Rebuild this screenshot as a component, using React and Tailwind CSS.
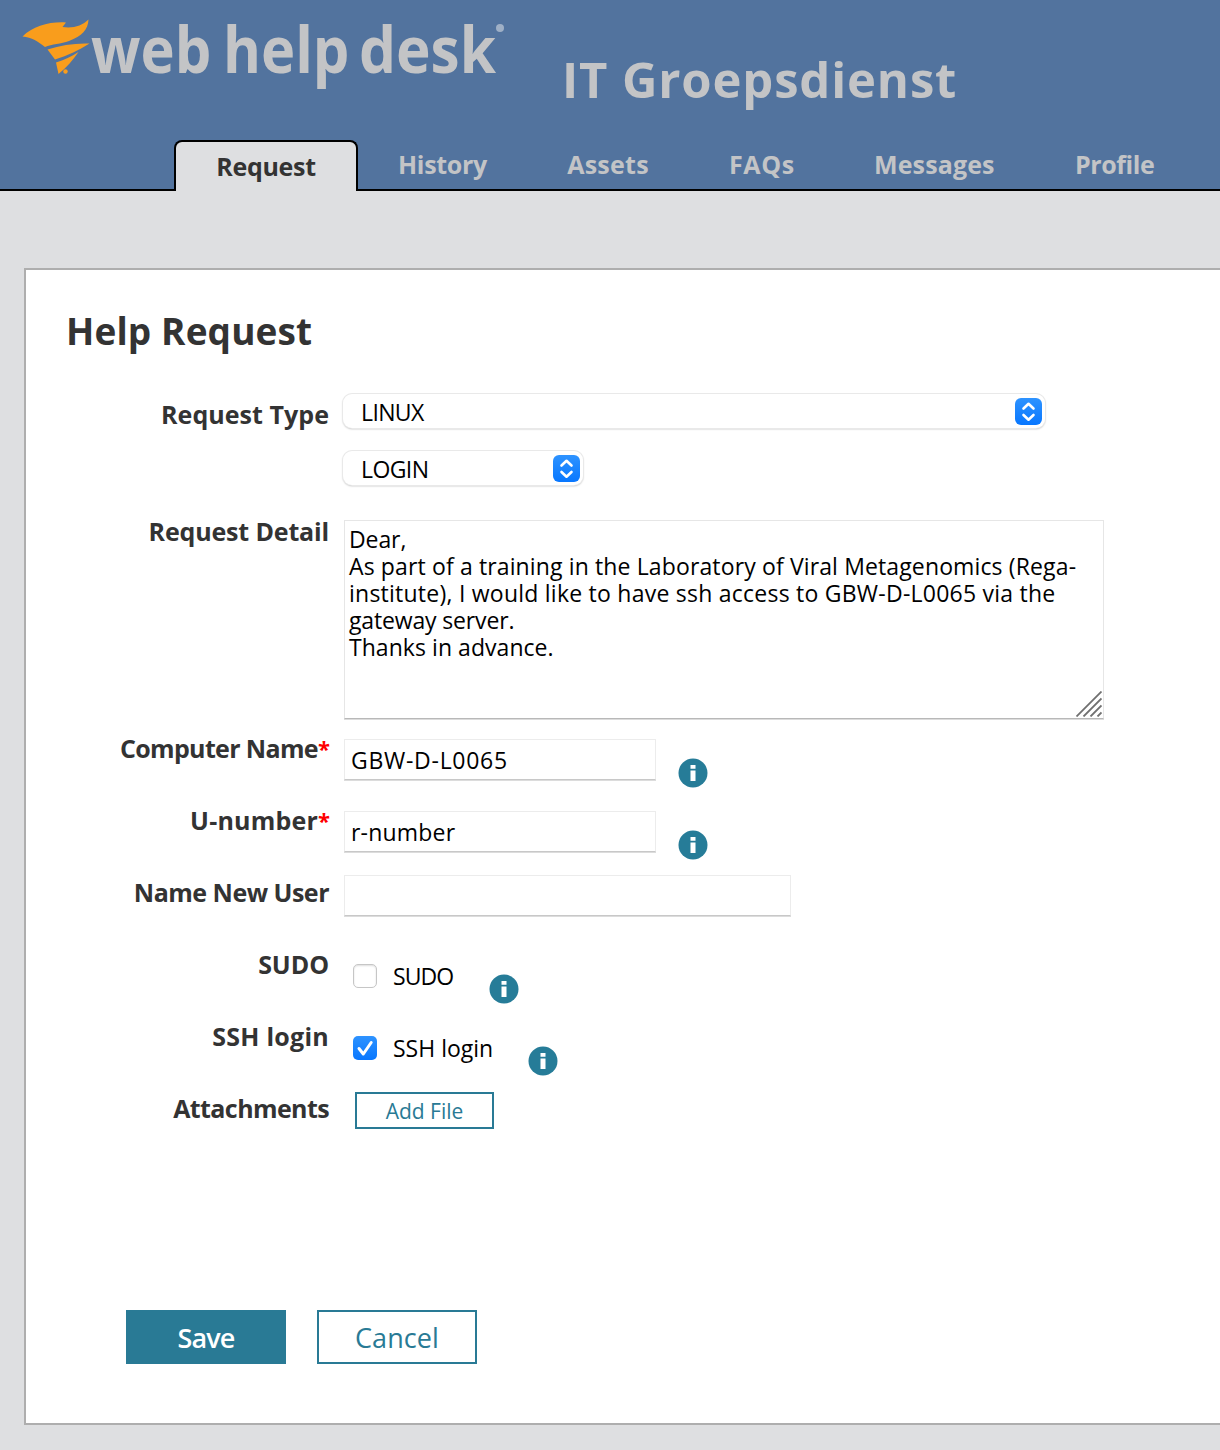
import React from "react";

const tabs = [
  ["History", "w-[89px] ml-[40px]", "tracking-[-0.31px]"],
  ["Assets", "w-[82px] ml-[80px]", "tracking-[0.26px]"],
  ["FAQs", "w-[65px] ml-[80px]", "tracking-[0.6px]"],
  ["Messages", "w-[120px] ml-[80px]", "tracking-[0.12px]"],
  ["Profile", "w-[79px] ml-[81px]", "tracking-[-0.41px]"],
];

function Logo() {
  return (
    <div className="flex text-[#c3c4c6]">
      <svg className="ml-[22px] mt-[19px] h-[56px] w-[68px] shrink-0" viewBox="22 19 68 56" fill="#f99d1c">
        <path d="M22.500 36.500C33 26 50 21.500 66 22.500L62.500 27C73 28.500 82 26 88.500 19.500C88 30 82 36 69 41C61 44 52 44 45 47C38 41.500 32 37.500 22.500 36.500Z" />
        <path d="M47.500 49.500C61 45 75 43 89.500 43.500C79 50 68 55.500 55 59.500Z" />
        <path d="M56 62.500C64 60 71.500 56.500 78.500 52C73.500 59.500 67 67 58.500 74Z" />
        <circle cx="65.500" cy="71.500" r="2.200" />
      </svg>
      <div className="flex h-[90px] text-[65px] leading-[90px] font-bold">
        <span className="mt-[3px] ml-px w-[134px] origin-left scale-x-[0.89]">web</span>
        <span className="mt-[3px] -ml-[2px] w-[136px] origin-left scale-x-[0.89]">help</span>
        <span className="mt-[3px] w-[138px] origin-left scale-x-[0.9]">desk</span>
      </div>
      <span className="mt-[24px] -ml-px h-[8px] w-[8px] rounded-full bg-[#9fb0c6]" />
    </div>
  );
}

function Info({ className }) {
  return (
    <svg className={"h-[30px] w-[30px] shrink-0 " + className} viewBox="0 0 30 30">
      <circle cx="15" cy="15" r="14.500" fill="#267c98" />
      <path d="M12.500 7h5v3.800h-5zM12.500 12.500h5v10.500h-5z" fill="#fff" />
    </svg>
  );
}

function Select({ className, textClass, children }) {
  return (
    <div className={"flex h-[34px] items-center justify-between rounded-[9px] bg-white pr-[3px] pl-[18px] shadow-[0_0_0_1px_#e9e9e9,0_1px_2px_#aaa] " + className}>
      <span className={"mt-[2px] leading-[27px] " + textClass}>{children}</span>
      <svg className="h-[27px] w-[27px]" viewBox="0 0 27 27">
        <defs>
          <linearGradient id="selectBlue" x1="0" y1="0" x2="0" y2="1">
            <stop offset="0" stopColor="#2e93ff" />
            <stop offset="1" stopColor="#0877ff" />
          </linearGradient>
        </defs>
        <rect width="27" height="27" rx="6" fill="url(#selectBlue)" />
        <path d="M8.500 10.500L13.500 5.800L18.500 10.500M8.500 17L13.500 21.700L18.500 17" fill="none" stroke="#fff" strokeWidth="2.600" strokeLinecap="round" strokeLinejoin="round" />
      </svg>
    </div>
  );
}

function Row({ label, track, required, className, children }) {
  return (
    <div className={"flex " + className}>
      <div className="mt-px flex w-[303px] shrink-0 justify-end text-[25px] leading-[30px] font-bold whitespace-nowrap text-[#333]">
        <span className={track}>{label}</span>
        {required && <span className="w-[11px] text-[22px] tracking-[-1px] text-[#f00]">*</span>}
      </div>
      {children}
    </div>
  );
}

const field = "h-[41px] ml-[15px] border border-[#ececec] border-b-[#c8c8c8] shadow-[0_1px_0_#dcdcdc] bg-white pl-[6px] leading-[27px] pt-[7px] whitespace-nowrap ";

export default function App() {
  return (
    <div className="h-[1450px] w-[1220px] overflow-hidden bg-[#dedfe1] font-['Open_Sans','Noto_Sans',sans-serif] text-[23px] text-black">
      <header className="flex h-[191px] flex-col justify-between border-b-2 border-black bg-[#52739e]">
        <div className="flex h-[120px]">
          <Logo />
          <h1 className="mt-[49px] ml-[58px] text-[49px] leading-[60px] font-bold tracking-[0.85px] whitespace-nowrap text-[#c3c4c6]">IT Groepsdienst</h1>
        </div>
        <nav className="-mb-[2px] flex h-[51px] pl-[174px] text-[25px] leading-[30px] font-bold whitespace-nowrap text-[#c3c4c6]">
          <div className="w-[184px] rounded-t-[8px] border-2 border-b-0 border-black bg-[#dedfe1] pt-[9px] text-center tracking-[-0.29px] text-[#333]">Request</div>
          {tabs.map(([name, box, track]) => (
            <div key={name} className={"pt-[9px] text-center " + box}>
              <span className={track}>{name}</span>
            </div>
          ))}
        </nav>
      </header>
      <main className="mt-[77px] ml-[24px] h-[1157px] w-[1220px] border-2 border-[#aeaeae] bg-white">
        <h2 className="mb-[41px] ml-[40px] pt-[41px] text-[37px] leading-[40px] font-bold tracking-[0.12px] text-[#333]">Help Request</h2>
        <Row label="Request Type" track="tracking-[0.05px]" className="h-[57px] pt-[6px]">
          <Select className="-mt-[4px] ml-[14px] w-[702px]" textClass="tracking-[-0.63px]">LINUX</Select>
        </Row>
        <div className="flex h-[66px] pl-[317px]">
          <Select className="mt-[2px] w-[240px]" textClass="tracking-[-0.6px]">LOGIN</Select>
        </div>
        <Row label="Request Detail" track="tracking-[-0.15px]" className="h-[217px]">
          <div className="relative mt-[5px] ml-[15px] h-[199px] w-[760px] border border-[#e6e6e6] border-b-[#b8b8b8] pt-[5px] pl-[4px] leading-[27px] whitespace-nowrap shadow-[0_1px_0_#dcdcdc]">
            <p className="tracking-[-0.1px]">Dear,</p>
            <p className="tracking-[0.13px]">As part of a training in the Laboratory of Viral Metagenomics (Rega-</p>
            <p className="tracking-[0.24px]">institute), I would like to have ssh access to GBW-D-L0065 via the</p>
            <p className="tracking-[-0.15px]">gateway server.</p>
            <p className="tracking-[0.05px]">Thanks in advance.</p>
            <svg className="absolute right-px bottom-px h-[26px] w-[26px]" viewBox="0 0 26 26" stroke="#707070" strokeWidth="1.800">
              <path d="M0.500 25.500L25.500 0.500M7.500 25.500L25.500 7.500M14.500 25.500L25.500 14.500M21.500 25.500L25.500 21.500" />
            </svg>
          </div>
        </Row>
        <Row label="Computer Name" track="tracking-[-0.64px]" required className="h-[72px]">
          <div className={field + "mt-[7px] w-[312px] tracking-[0.72px]"}>GBW-D-L0065</div>
          <Info className="mt-[26px] ml-[22px]" />
        </Row>
        <Row label="U-number" track="tracking-[0.2px]" required className="h-[72px]">
          <div className={field + "mt-[7px] w-[312px] tracking-[0.2px]"}>r-number</div>
          <Info className="mt-[26px] ml-[22px]" />
        </Row>
        <Row label="Name New User" track="tracking-[-0.5px]" className="h-[72px]">
          <div className={field + "-mt-px w-[447px]"} />
        </Row>
        <Row label="SUDO" track="tracking-[-0.06px]" className="h-[72px]">
          <span className="mt-[16px] ml-[24px] h-[24px] w-[24px] rounded-[5px] border border-[#c6c6c6] bg-white shadow-[inset_0_1px_2px_#ddd]" />
          <span className="mt-[15px] ml-[16px] w-[96px] leading-[27px] tracking-[-0.9px]">SUDO</span>
          <Info className="mt-[26px]" />
        </Row>
        <Row label="SSH login" track="tracking-[0.25px]" className="h-[72px]">
          <svg className="mt-[16px] ml-[24px] h-[24px] w-[24px]" viewBox="0 0 24 24">
            <rect width="24" height="24" rx="5" fill="url(#selectBlue)" />
            <path d="M6 12.500L10.300 18L18.200 6.500" fill="none" stroke="#fff" strokeWidth="3" strokeLinecap="round" strokeLinejoin="round" />
          </svg>
          <span className="mt-[15px] ml-[16px] w-[135px] leading-[27px]">SSH login</span>
          <Info className="mt-[26px]" />
        </Row>
        <Row label="Attachments" track="tracking-[-0.6px]" className="h-[218px]">
          <button className="ml-[26px] flex h-[37px] w-[139px] items-center justify-center border-2 border-[#297a95] pt-[2px] text-[21px] font-medium text-[#297a95]">Add File</button>
        </Row>
        <div className="flex gap-[31px] pl-[100px] text-[27px]">
          <button className="h-[54px] w-[160px] bg-[#297a95] pt-[3px] font-semibold tracking-[-0.9px] text-white">Save</button>
          <button className="h-[54px] w-[160px] border-2 border-[#297a95] pt-[3px] font-medium tracking-[0.1px] text-[#297a95]">Cancel</button>
        </div>
      </main>
    </div>
  );
}
